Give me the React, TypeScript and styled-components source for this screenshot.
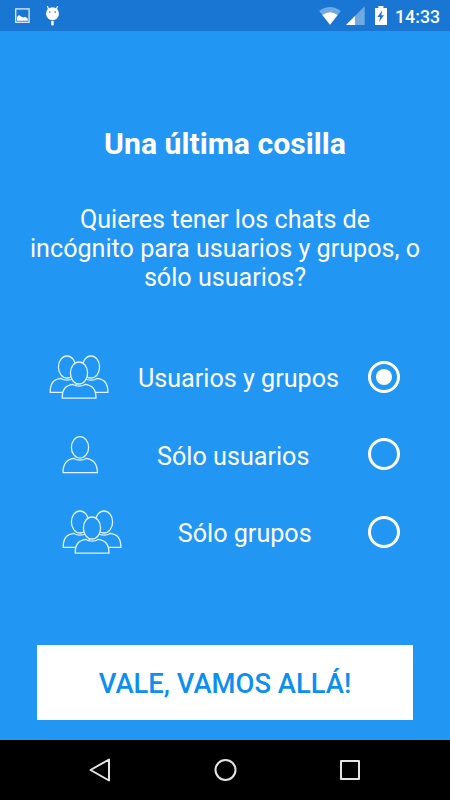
import React, { useState } from "react";
import styled, { createGlobalStyle } from "styled-components";

const GlobalStyle = createGlobalStyle`
  *, *::before, *::after { box-sizing: border-box; }
  html, body { margin: 0; padding: 0; }
  body { background: #2196f3; font-family: Roboto, sans-serif; }
`;

const Screen = styled.div`
  width: 450px;
  height: 800px;
  display: flex;
  flex-direction: column;
  background: #2196f3;
  color: #fff;
  overflow: hidden;
`;

const StatusBar = styled.header`
  height: 31px;
  flex: none;
  display: flex;
  align-items: flex-start;
  justify-content: space-between;
  background: #1976d2;
`;

const StatusIcons = styled.svg`
  display: block;
`;

const StatusRight = styled.div`
  display: flex;
  padding-right: 10px;
`;

const Clock = styled.time`
  padding-top: 6px;
  font-size: 17.8px;
  line-height: 22px;
  font-weight: 500;
  width: 45px;
  white-space: nowrap;
`;

const Content = styled.main`
  flex: 1;
  display: flex;
  flex-direction: column;
  text-align: center;
`;

const Title = styled.h1`
  margin: 95px 0 0;
  font-size: 30.2px;
  line-height: 36px;
  font-weight: 700;
`;

const Question = styled.p`
  margin: 42.6px 28px 0;
  font-size: 25.15px;
  line-height: 29.3px;
`;

const Options = styled.div`
  margin-top: 45.7px;
  display: flex;
  flex-direction: column;
`;

const Option = styled.button<{ $inset: number }>`
  height: 77.5px;
  padding: 0 50px 0 ${(p) => p.$inset}px;
  display: flex;
  align-items: center;
  border: 0;
  background: none;
  color: inherit;
  font: inherit;
  cursor: pointer;
`;

const OptionLabel = styled.span`
  flex: 1;
  font-size: 25.15px;
  line-height: 30px;
  padding-top: 5px;
`;

const PeopleIcon = styled.svg`
  flex: none;
  display: block;
  margin-top: 2px;
  fill: #2196f3;
  stroke: #e3f2fd;
  stroke-width: 1.3;
`;

const Radio = styled.span<{ $checked: boolean }>`
  flex: none;
  width: 32px;
  height: 32px;
  border: 3.4px solid #fff;
  border-radius: 50%;
  display: flex;
  align-items: center;
  justify-content: center;

  &::after {
    content: "";
    width: 16px;
    height: 16px;
    border-radius: 50%;
    background: ${(p) => (p.$checked ? "#fff" : "transparent")};
  }
`;

const Confirm = styled.button`
  margin: auto 37px 20px;
  height: 75px;
  flex: none;
  padding: 3px 0 0;
  border: 0;
  background: #fff;
  color: #0d8ff2;
  font-family: inherit;
  font-size: 27.4px;
  font-weight: 500;
  cursor: pointer;
`;

const NavBar = styled.nav`
  height: 60px;
  flex: none;
  display: flex;
  justify-content: center;
  background: #000;
`;

const NavIcon = styled.svg`
  width: 125px;
  height: 60px;
  fill: none;
  stroke: #e4e4e4;
  stroke-width: 2;
  stroke-linejoin: round;
`;

const GroupIcon = () => (
  <PeopleIcon width="60" height="45" viewBox="0 0 60 45">
    <path d="M1.2 37.4C1.2 28 4.5 24.4 12 23.4C15 25.6 21 25.6 24 23.4C31 24.4 34 28 34 37.4Z" />
    <path d="M26 37.4C26 28 29 24.4 36 23.4C39 25.6 45 25.6 48 23.4C55.5 24.4 58.9 28 58.9 37.4Z" />
    <ellipse cx="18" cy="12" rx="8.6" ry="11" />
    <ellipse cx="42" cy="12" rx="8.6" ry="11" />
    <path d="M13.2 43.2C13.2 34 16.5 30.4 24 29.4C27 31.6 33 31.6 36 29.4C43.5 30.4 47 34 47 43.2Z" />
    <ellipse cx="30" cy="18" rx="8.6" ry="11" />
  </PeopleIcon>
);

const PersonIcon = () => (
  <PeopleIcon width="37" height="38" viewBox="0 0 37 38">
    <path d="M1 36.6C1 27.4 4.5 23.4 12 22.4C15 24.6 21 24.6 24 22.4C31.5 23.4 35.4 27.4 35.4 36.6Z" />
    <ellipse cx="18" cy="11.4" rx="8.6" ry="10.7" />
  </PeopleIcon>
);

const OPTIONS = [
  { id: "both", label: "Usuarios y grupos", inset: 49, icon: <GroupIcon /> },
  { id: "users", label: "Sólo usuarios", inset: 61.5, icon: <PersonIcon /> },
  { id: "groups", label: "Sólo grupos", inset: 61.5, icon: <GroupIcon /> },
];

export default function App() {
  const [selected, setSelected] = useState("both");

  return (
    <>
      <GlobalStyle />
      <Screen>
        <StatusBar>
          <StatusIcons width="80" height="31" viewBox="0 0 80 31" fill="#fff">
            <rect x="15.7" y="8.9" width="13.4" height="13.4" fill="none" stroke="#d3e4f6" strokeWidth="1.4" />
            <path d="M17 20.7V17L19 15L21 16.6L23 17.6L25.3 16.8L27.8 18.8V20.7Z" />
            <circle cx="52.5" cy="13.7" r="6.5" />
            <path d="M48.5 9L47.5 6.6M56.5 9L57.5 6.6" stroke="#fff" strokeWidth="1.2" strokeLinecap="round" />
            <rect x="51.2" y="20.8" width="2.5" height="4.7" rx=".8" />
            <circle cx="49.8" cy="12.1" r=".8" fill="#1976d2" />
            <circle cx="55.2" cy="12.1" r=".8" fill="#1976d2" />
          </StatusIcons>
          <StatusRight>
            <StatusIcons width="77" height="31" viewBox="318 0 77 31" fill="#fff">
              <path d="M319.2 11Q330 2.8 340.8 11L330 24.8Z" opacity=".38" />
              <path d="M322.4 15Q330 9.4 337.6 15L330 24.8Z" />
              <path d="M364.7 6.3V25H346Z" opacity=".38" />
              <path d="M355 16V25H346Z" />
              <path d="M375 8H378.4V6H383.4V8H387V25H375Z" />
              <path d="M382.2 10.5L377.3 17H380.2L379 22L384 15.2H381.2Z" fill="#1976d2" />
            </StatusIcons>
            <Clock>14:33</Clock>
          </StatusRight>
        </StatusBar>
        <Content>
          <Title>Una última cosilla</Title>
          <Question>Quieres tener los chats de incógnito para usuarios y grupos, o sólo usuarios?</Question>
          <Options role="radiogroup">
            {OPTIONS.map((o) => (
              <Option
                key={o.id}
                role="radio"
                aria-checked={selected === o.id}
                $inset={o.inset}
                onClick={() => setSelected(o.id)}
              >
                {o.icon}
                <OptionLabel>{o.label}</OptionLabel>
                <Radio $checked={selected === o.id} />
              </Option>
            ))}
          </Options>
          <Confirm>VALE, VAMOS ALLÁ!</Confirm>
        </Content>
        <NavBar>
          <NavIcon viewBox="0 0 125 60">
            <path d="M71.5 19.5V40.5L53 30Z" transform="translate(-0.5 0)" />
          </NavIcon>
          <NavIcon viewBox="0 0 125 60">
            <circle cx="62.5" cy="30" r="10" />
          </NavIcon>
          <NavIcon viewBox="0 0 125 60">
            <rect x="53" y="21" width="18" height="18" />
          </NavIcon>
        </NavBar>
      </Screen>
    </>
  );
}
